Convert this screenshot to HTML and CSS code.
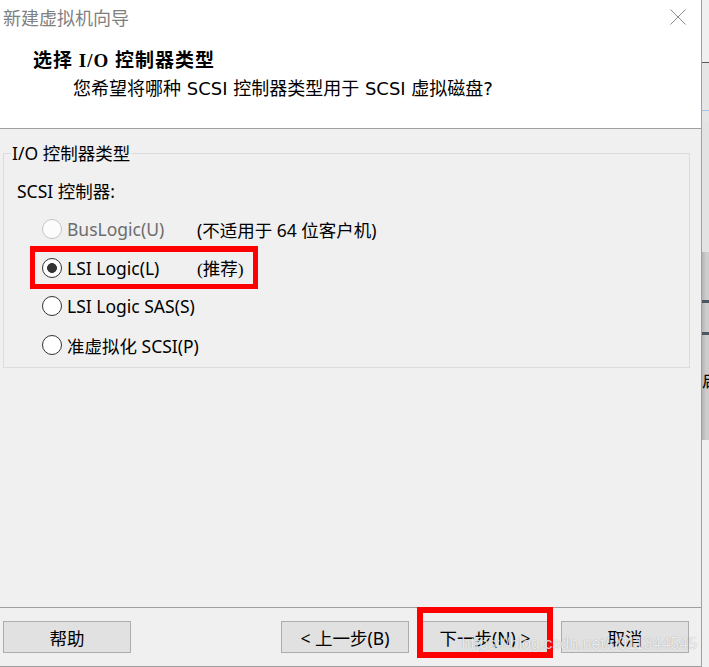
FILE: index.html
```html
<!DOCTYPE html>
<html lang="zh-CN">
<head>
    <meta charset="UTF-8">
    <title>新建虚拟机向导</title>
    <link rel="stylesheet" href="styles.css">
</head>
<body>
    <div class="screen">
        <div class="wizard">
            <div class="head">
                <div class="titlebar">
                    <span class="caption">新建虚拟机向导</span>
                    <svg class="close" width="16" height="16" viewBox="0 0 16 16">
                        <path d="M0.5 0.5 L15.5 15.5 M15.5 0.5 L0.5 15.5" stroke="#8c8c8c" stroke-width="1" fill="none"/>
                    </svg>
                </div>
                <div class="page-title">选择 I/O 控制器类型</div>
                <div class="page-desc">您希望将哪种 SCSI 控制器类型用于 SCSI 虚拟磁盘?</div>
            </div>

            <div class="content">
                <fieldset class="group">
                    <legend>I/O 控制器类型</legend>
                    <div class="group-label">SCSI 控制器:</div>

                    <div class="options">
                        <label class="option disabled">
                            <input type="radio" name="scsi" disabled>
                            <span class="opt-name">BusLogic(U)</span>
                            <span class="opt-hint">(不适用于 64 位客户机)</span>
                        </label>
                        <label class="option">
                            <input type="radio" name="scsi" checked>
                            <span class="opt-name">LSI Logic(L)</span>
                            <span class="opt-hint serif">(推荐)</span>
                            <span class="mark mark-row"></span>
                        </label>
                        <label class="option">
                            <input type="radio" name="scsi">
                            <span class="opt-name">LSI Logic SAS(S)</span>
                        </label>
                        <label class="option">
                            <input type="radio" name="scsi">
                            <span class="opt-name">准虚拟化 SCSI(P)</span>
                        </label>
                    </div>
                </fieldset>
            </div>

            <div class="footer">
                <button class="btn">帮助</button>
                <div class="nav">
                    <button class="btn">&lt; 上一步(B)</button>
                    <button class="btn next">下一步(N) &gt;<span class="mark mark-btn"></span></button>
                    <button class="btn">取消</button>
                </div>
                <div class="watermark">https://blog.csdn.net/u011344545</div>
            </div>
        </div>

        <div class="behind">
            <div class="b-top"></div>
            <div class="b-bar"></div>
            <div class="b-mid"><span class="b-blue"></span></div>
            <div class="b-light"></div>
            <div class="b-dark">
                <span class="b-rule first"></span>
                <span class="b-rule second"></span>
                <span class="b-glyph">启</span>
            </div>
            <div class="b-bottom"></div>
        </div>
    </div>
</body>
</html>
```

FILE: styles.css
```css
:root {
    --panel: #f0f0f0;
    --line: #a0a0a0;
    --group-line: #dcdcdc;
    --btn: #e1e1e1;
    --btn-border: #adadad;
    --mark: #ff0000;
    --ui-font: "Segoe UI", "Noto Sans", "Noto Sans CJK SC", sans-serif;
}

* {
    margin: 0;
    padding: 0;
    box-sizing: border-box;
}

body {
    font-family: var(--ui-font);
    font-size: 17.5px;
    color: #000;
    background: var(--panel);
    width: 709px;
    height: 667px;
    overflow: hidden;
}

.screen {
    display: flex;
    height: 667px;
}

.wizard {
    width: 702px;
    height: 667px;
    display: flex;
    flex-direction: column;
    border-right: 1px solid var(--line);
    border-bottom: 1px solid var(--line);
    background: var(--panel);
    position: relative;
}

/* header */
.head {
    height: 129px;
    background: #fff;
    border-bottom: 1px solid var(--line);
}

.titlebar {
    height: 34px;
    display: flex;
    justify-content: space-between;
    align-items: center;
    padding: 0 15px 0 3px;
}

.caption {
    color: #808080;
    font-family: "Noto Sans CJK SC", sans-serif;
    font-size: 18px;
    line-height: 1;
}

.close {
    margin-top: -1px;
}

.page-title {
    padding: 16px 0 0 33px;
    font-family: "Liberation Serif", "Noto Sans CJK SC", serif;
    font-weight: 700;
    font-size: 19px;
    letter-spacing: 1px;
    line-height: 22px;
}

.page-desc {
    padding: 6px 0 0 73px;
    font-family: "DejaVu Sans", "Noto Sans CJK SC", sans-serif;
    font-size: 18px;
    line-height: 22px;
}

/* group box */
.content {
    flex: 1;
    padding: 14px 11px 0 3px;
}

.group {
    border: 1px solid var(--group-line);
    padding: 0 0 3px 13px;
    min-width: 0;
}

.group legend {
    margin-left: -6px;
    padding: 0 2px 0 1px;
    font-size: 17.5px;
    line-height: 20px;
}

.group-label {
    margin-top: 16px;
    line-height: 24px;
}

.options {
    margin-top: 7px;
    display: flex;
    flex-direction: column;
}

.option {
    height: 38.6px;
    display: flex;
    align-items: center;
    position: relative;
}

.option input {
    appearance: none;
    -webkit-appearance: none;
    width: 20px;
    height: 20px;
    margin: 0 5px 0 25px;
    border: 1px solid #333;
    border-radius: 50%;
    background: #fff;
    flex-shrink: 0;
}

.option input:checked {
    background: radial-gradient(circle, #333 0 4.6px, #fff 5.2px);
}

.option input:disabled {
    border-color: #c4c4c4;
    background: #fcfcfc;
}

.opt-name {
    width: 130px;
    white-space: nowrap;
}

.disabled .opt-name {
    color: #6d6d6d;
}

.opt-hint {
    white-space: nowrap;
}

.opt-hint.serif {
    font-family: "Liberation Serif", "Noto Sans CJK SC", serif;
}

/* red annotation boxes */
.mark {
    position: absolute;
    border: 5px solid var(--mark);
    pointer-events: none;
}

.mark-row {
    left: 13px;
    top: -3px;
    width: 228px;
    height: 43px;
    border-top-width: 6px;
}

.mark-btn {
    left: -5px;
    top: -15px;
    width: 136px;
    height: 51px;
    border-width: 6px;
}

/* footer */
.footer {
    height: 59px;
    border-top: 1px solid var(--line);
    display: flex;
    justify-content: space-between;
    padding: 13px 12px 0 3px;
    position: relative;
}

.nav {
    display: flex;
    gap: 12px;
}

.btn {
    width: 128px;
    height: 32px;
    background: var(--btn);
    border: 1px solid var(--btn-border);
    font-family: var(--ui-font);
    font-size: 17.5px;
    color: #000;
    position: relative;
}

.watermark {
    position: absolute;
    right: 4px;
    top: 27px;
    font-family: "Liberation Sans", sans-serif;
    font-size: 16px;
    color: rgba(255, 255, 255, 0.8);
    text-shadow: 0 0 1px rgba(0, 0, 0, 0.35);
    pointer-events: none;
}

/* strip of the window behind */
.behind {
    flex: 1;
    display: flex;
    flex-direction: column;
    overflow: hidden;
}

.b-top {
    height: 62px;
    background: #f0f0f0;
}

.b-bar {
    height: 1px;
    background: #5a5a5a;
}

.b-mid {
    height: 59px;
    background: #e6e6e6;
    padding-top: 47px;
}

.b-blue {
    display: block;
    height: 1px;
    background: #9fc3e6;
}

.b-light {
    height: 130px;
    background: #e3e3e3;
}

.b-dark {
    height: 188px;
    background: linear-gradient(90deg, #b4b4b4, #cdcdcd 60%);
    position: relative;
}

.b-rule {
    position: absolute;
    left: 0;
    right: 0;
    height: 3px;
    background: #4b5663;
}

.b-rule.first {
    top: 48px;
}

.b-rule.second {
    top: 80px;
}

.b-glyph {
    position: absolute;
    left: 0;
    top: 119px;
    font-family: "Noto Sans CJK SC", sans-serif;
    font-size: 17px;
    line-height: 1;
}

.b-bottom {
    flex: 1;
    background: #f0f0f0;
}
```
